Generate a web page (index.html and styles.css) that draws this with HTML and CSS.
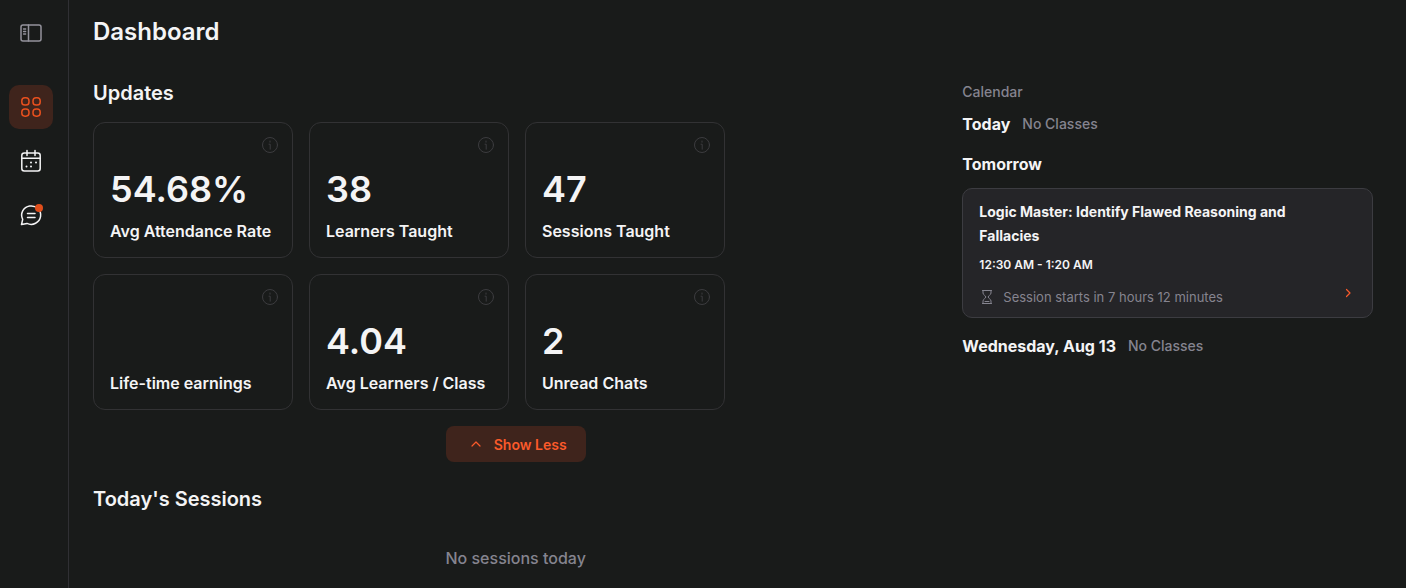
FILE: index.html
```html
<!DOCTYPE html>
<html lang="en">
<head>
  <meta charset="UTF-8">
  <meta name="viewport" content="width=device-width, initial-scale=1">
  <title>Dashboard</title>
  <link rel="stylesheet" href="styles.css">
</head>
<body>
  <svg class="sprite" aria-hidden="true">
    <symbol id="info" viewBox="0 0 20 20">
      <circle cx="10" cy="10" r="7.5"/>
      <path d="M9 9.2h1.2v5M10 6v1.2"/>
    </symbol>
  </svg>

  <div class="app">
    <nav class="sidebar" aria-label="Main menu">
      <button class="toggle" type="button" aria-label="Toggle sidebar">
        <svg viewBox="0 0 24 24">
          <rect x="2" y="4" width="20" height="16" rx="2"/>
          <path d="M9.5 4v16M4.6 8h2M4.6 10.5h2M4.6 13h2"/>
        </svg>
      </button>
      <a class="nav-link active" href="#dashboard" aria-label="Dashboard">
        <svg viewBox="0 0 24 24">
          <rect x="2.8" y="2.8" width="7.2" height="7.2" rx="3.1"/>
          <rect x="14" y="2.8" width="7.2" height="7.2" rx="3.1"/>
          <rect x="2.8" y="14" width="7.2" height="7.2" rx="3.1"/>
          <rect x="14" y="14" width="7.2" height="7.2" rx="3.1"/>
        </svg>
      </a>
      <a class="nav-link" href="#calendar" aria-label="Calendar">
        <svg viewBox="0 0 24 24">
          <rect x="2.8" y="4" width="18.4" height="18" rx="2.5"/>
          <path d="M3 9.3h18M8 1.5v5M16 1.5v5"/>
          <path class="dots" d="M12 13.5h.01M17 13.5h.01M7.5 17.5h.01M12 17.5h.01"/>
        </svg>
      </a>
      <a class="nav-link" href="#chats" aria-label="Chats">
        <svg viewBox="0 0 24 24">
          <path d="M2.5 21.5l1.2-5.2A9.5 9.2 0 1 1 8 20.4zM8.5 10.5h7.5M8.5 14.5h7.5"/>
        </svg>
        <span class="badge"></span>
      </a>
    </nav>

    <div class="page">
      <h1>Dashboard</h1>

      <div class="columns">
        <main class="main">
          <h2>Updates</h2>
          <div class="cards">
            <div class="card">
              <button class="info" type="button" aria-label="About attendance rate"><svg><use href="#info"/></svg></button>
              <p class="value">54.68%</p>
              <p class="label">Avg Attendance Rate</p>
            </div>
            <div class="card">
              <button class="info" type="button" aria-label="About learners taught"><svg><use href="#info"/></svg></button>
              <p class="value">38</p>
              <p class="label">Learners Taught</p>
            </div>
            <div class="card">
              <button class="info" type="button" aria-label="About sessions taught"><svg><use href="#info"/></svg></button>
              <p class="value">47</p>
              <p class="label">Sessions Taught</p>
            </div>
            <div class="card">
              <button class="info" type="button" aria-label="About earnings"><svg><use href="#info"/></svg></button>
              <p class="value"></p>
              <p class="label">Life-time earnings</p>
            </div>
            <div class="card">
              <button class="info" type="button" aria-label="About learners per class"><svg><use href="#info"/></svg></button>
              <p class="value">4.04</p>
              <p class="label">Avg Learners / Class</p>
            </div>
            <div class="card">
              <button class="info" type="button" aria-label="About unread chats"><svg><use href="#info"/></svg></button>
              <p class="value">2</p>
              <p class="label">Unread Chats</p>
            </div>
          </div>

          <button class="show-less" type="button">
            <svg viewBox="0 0 12 12"><path d="M2 8l4-4 4 4"/></svg>
            Show Less
          </button>

          <h2>Today's Sessions</h2>
          <p class="empty">No sessions today</p>
        </main>

        <aside class="calendar">
          <p class="caption">Calendar</p>
          <div class="day">
            <h3>Today</h3>
            <span>No Classes</span>
          </div>
          <div class="day">
            <h3>Tomorrow</h3>
          </div>
          <a class="session" href="#session">
            <span class="session-title">Logic Master: Identify Flawed Reasoning and Fallacies</span>
            <span class="session-time">12:30 AM - 1:20 AM</span>
            <span class="session-start">
              <svg class="hourglass" viewBox="0 0 16 16">
                <path d="M3.5 1.5h9M3.5 14.5h9M4 1.5v2.5c0 2 2.8 2.5 2.8 4S4 10 4 12v2.5M12 1.5v2.5c0 2-2.8 2.5-2.8 4S12 10 12 12v2.5M6 12.5h4"/>
              </svg>
              Session starts in 7 hours 12 minutes
              <svg class="arrow" viewBox="0 0 12 12"><path d="M4.5 2.5L8 6 4.5 9.5"/></svg>
            </span>
          </a>
          <div class="day">
            <h3>Wednesday, Aug 13</h3>
            <span>No Classes</span>
          </div>
        </aside>
      </div>
    </div>
  </div>
</body>
</html>
```

FILE: styles.css
```css
* {
  box-sizing: border-box;
}

body {
  margin: 0;
  background: #191b1a;
  color: #f4f4f5;
  font-family: Inter, "Liberation Sans", sans-serif;
}

h1, h2, h3, p {
  margin: 0;
}

button {
  padding: 0;
  border: none;
  background: none;
  color: inherit;
  font-family: inherit;
  cursor: pointer;
}

a {
  color: inherit;
  text-decoration: none;
}

svg {
  fill: none;
  stroke: currentColor;
  stroke-width: 1.5;
  stroke-linecap: round;
  stroke-linejoin: round;
}

.sprite {
  display: none;
}

.app {
  display: flex;
  min-height: 100vh;
}

/* sidebar */
.sidebar {
  display: flex;
  flex-direction: column;
  flex-shrink: 0;
  gap: 10px;
  width: 69px;
  padding: 11px 9px;
  border-right: 1px solid #303034;
}

.toggle,
.nav-link {
  display: flex;
  align-items: center;
  justify-content: center;
  position: relative;
  width: 44px;
  height: 44px;
  border-radius: 10px;
}

.toggle {
  margin-bottom: 20px;
  color: #94939c;
}

.toggle svg,
.nav-link svg {
  width: 24px;
  height: 24px;
}

.nav-link.active {
  background: #3f241c;
  color: #e8501e;
}

.dots {
  stroke-width: 2;
}

.badge {
  position: absolute;
  top: 11px;
  right: 10px;
  width: 8px;
  height: 8px;
  border-radius: 50%;
  background: #e04e1b;
}

/* page */
.page {
  flex: 1;
  padding: 16px 33px 16px 24px;
}

h1 {
  font-size: 24px;
  line-height: 32px;
  font-weight: 600;
}

h2 {
  font-size: 20px;
  line-height: 28px;
  font-weight: 600;
}

h3 {
  font-size: 16px;
  line-height: 24px;
  font-weight: 700;
}

.columns {
  display: grid;
  grid-template-columns: repeat(12, 1fr);
  gap: 24px;
  margin-top: 31px;
}

.main {
  display: flex;
  flex-direction: column;
  grid-column: span 8;
}

.cards {
  display: grid;
  grid-template-columns: repeat(auto-fill, 200px);
  gap: 16px;
  margin-top: 15px;
}

.card {
  display: flex;
  flex-direction: column;
  padding: 12px 12px 14px;
  border: 1px solid #323234;
  border-radius: 12px;
}

.info {
  align-self: flex-end;
  width: 20px;
  height: 20px;
  color: #3c3c3f;
}

.info svg {
  display: block;
  width: 20px;
  height: 20px;
  stroke-width: 1;
}

.value {
  height: 44px;
  margin: 12px 4px 8px;
  font-size: 36px;
  line-height: 44px;
  font-weight: 600;
}

.label {
  margin: 0 4px;
  font-size: 16px;
  line-height: 24px;
  font-weight: 600;
  white-space: nowrap;
}

.show-less {
  display: flex;
  align-items: center;
  align-self: center;
  gap: 12px;
  height: 36px;
  margin: 16px 0 23px;
  padding: 0 19px 0 24px;
  border-radius: 8px;
  background: #3f241c;
  color: #fb5a2a;
  font-size: 14px;
  font-weight: 600;
}

.show-less svg,
.arrow {
  width: 12px;
  height: 12px;
  stroke-width: 1.2;
}

.empty {
  margin-top: 33px;
  color: #85848f;
  font-size: 16px;
  line-height: 24px;
  font-weight: 500;
  text-align: center;
}

/* calendar */
.calendar {
  display: flex;
  flex-direction: column;
  grid-column: span 4;
}

.caption {
  margin: 3px 0 10px;
  color: #85848f;
  font-size: 14px;
  line-height: 20px;
  font-weight: 500;
}

.day {
  display: flex;
  align-items: center;
  gap: 12px;
  margin-bottom: 16px;
}

.day span {
  color: #85848f;
  font-size: 14px;
  line-height: 24px;
  font-weight: 500;
}

.session {
  display: flex;
  flex-direction: column;
  margin: -4px 0 16px;
  padding: 11px 16px 10px;
  border: 1px solid #3c3c41;
  border-radius: 10px;
  background: #252528;
}

.session-title {
  padding-right: 48px;
  font-size: 14px;
  line-height: 24px;
  font-weight: 700;
}

.session-time {
  margin-top: 7px;
  font-size: 12px;
  line-height: 20px;
  font-weight: 600;
}

.session-start {
  display: flex;
  align-items: center;
  gap: 8px;
  margin-top: 12px;
  color: #85848f;
  font-size: 13px;
  line-height: 20px;
}

.hourglass {
  width: 16px;
  height: 16px;
  stroke-width: 1;
}

.arrow {
  align-self: flex-start;
  margin-left: auto;
  margin-right: 2px;
  color: #fb5a2a;
}
```
